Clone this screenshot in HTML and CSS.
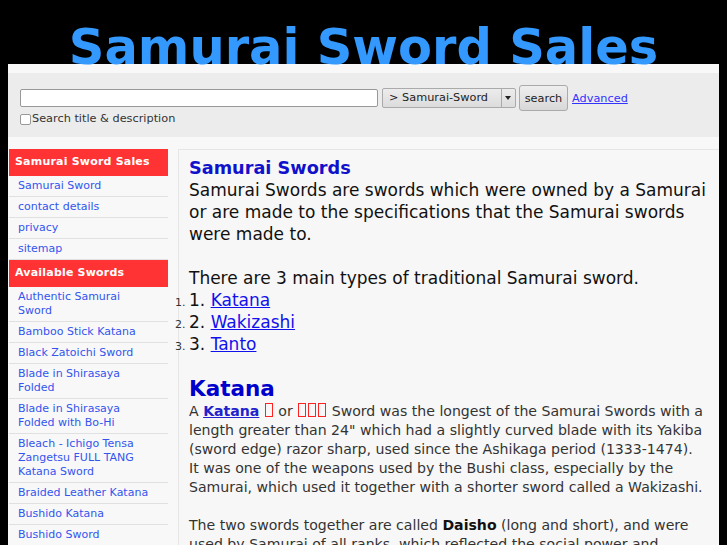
FILE: index.html
```html
<!DOCTYPE html>
<html lang="en">
<head>
    <meta charset="UTF-8">
    <title>Samurai Sword Sales</title>
    <link rel="stylesheet" href="styles.css">
</head>
<body>
    <h1 class="site-title">Samurai Sword Sales</h1>
    <div class="page">
        <!-- Search -->
        <form class="searchbar">
            <div class="search-row">
                <input type="text" class="search-input">
                <div class="cat-select">
                    <span class="cat-label">&gt; Samurai-Sword</span>
                    <span class="cat-arrow"></span>
                </div>
                <button type="button" class="search-button">search</button>
                <a href="#" class="advanced">Advanced</a>
            </div>
            <label class="search-check"><span class="checkbox"></span>Search title &amp; description</label>
        </form>

        <div class="layout">
            <!-- Sidebar -->
            <div class="sidebar">
                <div class="side-head">Samurai Sword Sales</div>
                <a href="#" class="side-link">Samurai Sword</a>
                <a href="#" class="side-link">contact details</a>
                <a href="#" class="side-link">privacy</a>
                <a href="#" class="side-link">sitemap</a>
                <div class="side-head">Available Swords</div>
                <a href="#" class="side-link">Authentic Samurai Sword</a>
                <a href="#" class="side-link">Bamboo Stick Katana</a>
                <a href="#" class="side-link">Black Zatoichi Sword</a>
                <a href="#" class="side-link">Blade in Shirasaya Folded</a>
                <a href="#" class="side-link">Blade in Shirasaya Folded with Bo-Hi</a>
                <a href="#" class="side-link">Bleach - Ichigo Tensa Zangetsu FULL TANG Katana Sword</a>
                <a href="#" class="side-link">Braided Leather Katana</a>
                <a href="#" class="side-link">Bushido Katana</a>
                <a href="#" class="side-link">Bushido Sword</a>
            </div>

            <!-- Main content -->
            <div class="content">
                <h3 class="intro-title">Samurai Swords</h3>
                <p class="intro">Samurai Swords are swords which were owned by a Samurai or are made to the specifications that the Samurai swords were made to.<br><br>There are 3 main types of traditional Samurai sword.</p>
                <ol class="types">
                    <li><span>1. <a href="#">Katana</a></span></li>
                    <li><span>2. <a href="#">Wakizashi</a></span></li>
                    <li><span>3. <a href="#">Tanto</a></span></li>
                </ol>

                <h2 class="section-title">Katana</h2>
                <p class="text">A <a href="#" class="strong-link">Katana</a> <span class="jp" lang="ja">刀</span> or <span class="jp" lang="ja">カ</span><span class="jp" lang="ja">タ</span><span class="jp" lang="ja">ナ</span> Sword was the longest of the Samurai Swords with a length greater than 24" which had a slightly curved blade with its Yakiba (sword edge) razor sharp, used since the Ashikaga period (1333-1474). It was one of the weapons used by the Bushi class, especially by the Samurai, which used it together with a shorter sword called a Wakizashi.</p>
                <p class="text">The two swords together are called <strong>Daisho</strong> (long and short), and were used by Samurai of all ranks, which reflected the social power and personal honour of the Samurai.</p>
            </div>
        </div>
    </div>
</body>
</html>
```

FILE: styles.css
```css
body {
    margin: 0 8px;
    background: #000;
    font-family: "DejaVu Sans", sans-serif;
    color: #111;
    overflow: hidden;
    height: 545px;
}
.site-title {
    position: relative;
    z-index: 1;
    margin: 18px 0 -12px;
    font-size: 49.5px;
    line-height: 58px;
    font-weight: bold;
    text-align: center;
    color: #3399ff;
}
.page {
    background: #f8f8f8;
    padding-top: 9px;
    min-height: 600px;
}
.searchbar {
    background: #ececec;
    padding: 12px 11px 11px 12px;
    margin: 0;
}
.search-row {
    display: flex;
    align-items: center;
    gap: 4px;
}
.search-input {
    width: 358px;
    height: 18px;
    box-sizing: border-box;
    margin: 0;
    border: 1px solid #999;
    border-radius: 2px;
    background: #fff;
}
.cat-select {
    display: flex;
    height: 20px;
    box-sizing: border-box;
    border: 1px solid #aaa;
    border-radius: 2px;
    background: linear-gradient(#ececec, #dcdcdc);
    font-size: 11.3px;
    color: #222;
}
.cat-label {
    width: 106px;
    padding: 0 6px;
    line-height: 18px;
}
.cat-arrow {
    width: 13px;
    border-left: 1px solid #aaa;
    position: relative;
}
.cat-arrow::after {
    content: "";
    position: absolute;
    left: 3px;
    top: 7px;
    border-left: 3px solid transparent;
    border-right: 3px solid transparent;
    border-top: 4px solid #222;
}
.search-button {
    height: 26px;
    width: 49px;
    padding: 0;
    margin: 0 0 0 -1px;
    border: 1px solid #aaa;
    border-radius: 3px;
    background: linear-gradient(#eee, #d8d8d8);
    font-family: "DejaVu Sans", sans-serif;
    font-size: 11.3px;
    color: #222;
}
.advanced {
    font-size: 11.3px;
    color: #3333ff;
}
.search-check {
    display: flex;
    align-items: center;
    margin-top: 1px;
    font-size: 11.3px;
    line-height: 14px;
    color: #333;
}
.checkbox {
    width: 11px;
    height: 11px;
    border: 1px solid #999;
    border-radius: 2px;
    background: #fff;
    box-sizing: border-box;
    margin-right: 1px;
}
.layout {
    display: flex;
    align-items: flex-start;
    gap: 10px;
    margin-top: 12px;
    padding-left: 1px;
}
.sidebar {
    width: 159px;
    flex: none;
    background: #f8f8f8;
}
.side-head {
    background: #ff3333;
    color: #fff;
    font-size: 11px;
    font-weight: bold;
    line-height: 14px;
    padding: 6px 6px 7px;
    letter-spacing: 0.2px;
    white-space: nowrap;
}
.side-link {
    display: block;
    padding: 3px 14px 3px 9px;
    font-size: 11px;
    line-height: 14px;
    color: #3355ee;
    text-decoration: none;
    border-bottom: 1px solid #e0e0e0;
}
.content {
    flex: 1;
    border: 1px solid #e6e6e6;
    border-right: none;
    background: #f7f7f7;
    padding: 7px 10px 8px 10px;
}
.intro-title {
    margin: 0;
    font-size: 17.7px;
    line-height: 22px;
    color: #1111cc;
}
.intro {
    margin: 0;
    font-size: 17px;
    line-height: 22px;
}
.types {
    margin: 0 0 21px;
    padding: 0;
    font-size: 11px;
    color: #333;
}
.types li span {
    font-size: 17px;
    line-height: 22px;
    color: #111;
}
.types a {
    color: #1111ee;
}
.section-title {
    margin: 0;
    font-size: 21.5px;
    line-height: 26px;
    color: #0000cc;
}
.text {
    margin: 0 5px 19px 0;
    font-size: 14.1px;
    line-height: 19px;
    color: #333;
}
.strong-link {
    font-weight: bold;
    color: #2222cc;
}
.text strong {
    color: #111;
}
.jp {
    display: inline-block;
    width: 6px;
    height: 12px;
    border: 1px solid #ff2222;
    overflow: hidden;
    font-size: 1px;
    color: transparent;
    vertical-align: -1px;
    margin: 0 1px;
}
```
